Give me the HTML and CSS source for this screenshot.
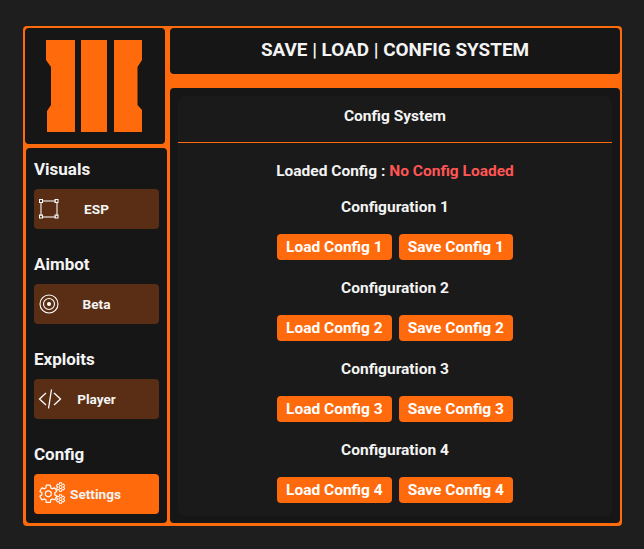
FILE: index.html
```html
<!DOCTYPE html>
<html lang="en">
<head>
    <meta charset="UTF-8">
    <meta name="viewport" content="width=device-width, initial-scale=1.0">
    <title>Config System</title>
    <link rel="stylesheet" href="styles.css">
</head>
<body>
    <svg class="defs" width="0" height="0">
        <defs>
            <path id="gear" d="M19.43 12.98c.04-.32.07-.64.07-.98 0-.34-.03-.66-.07-.98l2.11-1.65c.19-.15.24-.42.12-.64l-2-3.46c-.12-.22-.39-.3-.61-.22l-2.49 1c-.52-.4-1.08-.73-1.69-.98l-.38-2.65C14.46 2.18 14.25 2 14 2h-4c-.25 0-.46.18-.49.42l-.38 2.65c-.61.25-1.17.59-1.69.98l-2.49-1c-.23-.09-.49 0-.61.22l-2 3.46c-.13.22-.07.49.12.64l2.11 1.65c-.04.32-.07.65-.07.98 0 .33.03.66.07.98l-2.11 1.65c-.19.15-.24.42-.12.64l2 3.46c.12.22.39.3.61.22l2.49-1c.52.4 1.08.73 1.69.98l.38 2.65c.03.24.24.42.49.42h4c.25 0 .46-.18.49-.42l.38-2.65c.61-.25 1.17-.59 1.69-.98l2.49 1c.23.09.49 0 .61-.22l2-3.46c.12-.22.07-.49-.12-.64l-2.11-1.65zM12 15.5a3.500 3.500 0 1 1 0-7 3.500 3.500 0 0 1 0 7z"/>
        </defs>
    </svg>

    <div class="frame">
        <div class="logo-panel">
            <svg class="logo" width="96" height="92" viewBox="0 0 96 92">
                <path d="M0 0H29V92H1V71L5 65V27L0 20Z"/>
                <path d="M35 0H61V92H35Z"/>
                <path d="M68 0H96V20L91.500 27V65L96 70V92H68Z"/>
            </svg>
        </div>

        <div class="title-panel">
            <h1>SAVE | LOAD | CONFIG SYSTEM</h1>
        </div>

        <nav class="nav-panel">
            <div class="nav-group">
                <h2>Visuals</h2>
                <a class="nav-item">
                    <svg class="nav-icon" width="22" height="22" viewBox="0 0 22 22" fill="none" stroke="#fff">
                        <path d="M4 3H18M4 19H18M3 4V18M19 4V18" stroke-opacity=".7" stroke-width="1.500"/>
                        <rect x="1.500" y="1.500" width="3" height="3"/>
                        <rect x="17" y="1.500" width="3" height="3"/>
                        <rect x="1.500" y="17" width="3" height="3"/>
                        <rect x="17" y="17" width="3" height="3"/>
                    </svg>
                    <span>ESP</span>
                </a>
            </div>
            <div class="nav-group">
                <h2>Aimbot</h2>
                <a class="nav-item">
                    <svg class="nav-icon" width="22" height="22" viewBox="0 0 22 22" fill="none" stroke="#fff" stroke-width="1.100">
                        <circle cx="11" cy="11" r="9"/>
                        <circle cx="11" cy="11" r="5.500"/>
                        <circle cx="11" cy="11" r="2" fill="#fff" stroke="none"/>
                    </svg>
                    <span>Beta</span>
                </a>
            </div>
            <div class="nav-group">
                <h2>Exploits</h2>
                <a class="nav-item">
                    <svg class="nav-icon" width="24" height="22" viewBox="0 0 24 22" fill="none" stroke="#fff" stroke-width="1.300">
                        <path d="M8 5L1.500 11L8 17M16 5L22.500 11L16 17M13.500 1.500L10.500 20.500"/>
                    </svg>
                    <span>Player</span>
                </a>
            </div>
            <div class="nav-group">
                <h2>Config</h2>
                <a class="nav-item active">
                    <svg class="nav-icon" width="28" height="24" viewBox="0 0 28 24" fill="none" stroke="#fff">
                        <use href="#gear" stroke-width="1.400" transform="translate(0 1.500) scale(0.860)"/>
                        <use href="#gear" stroke-width="2.400" transform="translate(17.500 0) scale(0.420)"/>
                        <use href="#gear" stroke-width="2.400" transform="translate(17.500 12) scale(0.420)"/>
                    </svg>
                    <span>Settings</span>
                </a>
            </div>
        </nav>

        <main class="main-panel">
            <div class="config-box">
                <h3 class="config-title">Config System</h3>
                <hr class="divider">
                <p class="loaded">Loaded Config : <span class="loaded-state">No Config Loaded</span></p>

                <section class="slot">
                    <h4>Configuration 1</h4>
                    <div class="slot-buttons">
                        <button class="button">Load Config 1</button>
                        <button class="button">Save Config 1</button>
                    </div>
                </section>
                <section class="slot">
                    <h4>Configuration 2</h4>
                    <div class="slot-buttons">
                        <button class="button">Load Config 2</button>
                        <button class="button">Save Config 2</button>
                    </div>
                </section>
                <section class="slot">
                    <h4>Configuration 3</h4>
                    <div class="slot-buttons">
                        <button class="button">Load Config 3</button>
                        <button class="button">Save Config 3</button>
                    </div>
                </section>
                <section class="slot">
                    <h4>Configuration 4</h4>
                    <div class="slot-buttons">
                        <button class="button">Load Config 4</button>
                        <button class="button">Save Config 4</button>
                    </div>
                </section>
            </div>
        </main>
    </div>
</body>
</html>
```

FILE: styles.css
```css
* {
    box-sizing: border-box;
}
body {
    margin: 0;
    padding: 26px 22px 23px 23px;
    background-color: #1e1e1e;
    font-family: Roboto, "Liberation Sans", sans-serif;
    color: #f4f4f4;
}
.defs {
    position: absolute;
}
.frame {
    display: grid;
    grid-template-columns: 145px 450px;
    grid-template-rows: 116px 375px;
    row-gap: 4px;
    width: 599px;
    height: 500px;
    padding: 2px 2px 3px 2px;
    background-color: #ff6a0d;
    border-radius: 4px;
}
.logo-panel, .title-panel, .nav-panel, .main-panel {
    background-color: #161616;
    border-radius: 4px;
}
.logo-panel {
    width: 140px;
    padding: 12px 0 0 21px;
}
.logo {
    display: block;
    fill: #ff6a0d;
}
.title-panel {
    grid-row: 1;
    grid-column: 2;
    align-self: start;
    display: flex;
    align-items: center;
    justify-content: center;
    height: 46px;
    padding-bottom: 3px;
}
h1 {
    margin: 0;
    font-size: 18.9px;
    font-weight: 700;
}
.main-panel {
    grid-row: 1 / 3;
    grid-column: 2;
    margin-top: 60px;
    padding: 8px;
}
.nav-panel {
    grid-row: 2;
    grid-column: 1;
    width: 141px;
    margin-left: 1px;
    padding: 12px 8px 0 8px;
}
.nav-group {
    height: 95px;
}
.nav-group h2 {
    margin: 0 0 10px 0;
    font-size: 17px;
    line-height: 19px;
    font-weight: 700;
}
.nav-item {
    display: grid;
    grid-template-columns: 1fr auto 1fr;
    align-items: center;
    width: 125px;
    height: 40px;
    padding-left: 4px;
    padding-right: 4px;
    background-color: #5a2e15;
    border-radius: 4px;
    font-size: 13.6px;
    font-weight: 700;
}
.nav-item.active {
    padding-right: 6px;
    background-color: #ff6a0d;
}
.nav-icon {
    display: block;
}
.config-box {
    height: 420px;
    background-color: #1a1a1a;
    border-radius: 8px;
    text-align: center;
    font-size: 15.5px;
    font-weight: 700;
}
.config-title {
    margin: 0;
    padding-top: 11px;
    font-size: 15.5px;
    line-height: 18px;
    font-weight: 700;
}
.divider {
    height: 1px;
    margin: 17px 0 0 0;
    border: none;
    background-color: #ff6a0d;
}
.loaded {
    margin: 19px 0 0 0;
    line-height: 18px;
}
.loaded-state {
    color: #ff5555;
}
.slot {
    padding-top: 18px;
    height: 81px;
}
.slot h4 {
    margin: 0 0 18px 0;
    font-size: 15.5px;
    line-height: 18px;
    font-weight: 700;
}
.slot-buttons {
    display: flex;
    justify-content: center;
    gap: 7px;
}
.button {
    height: 26px;
    padding: 0 9px;
    background-color: #ff6a0d;
    color: #fff;
    border: none;
    border-radius: 4px;
    font-family: inherit;
    font-size: 15.5px;
    font-weight: 700;
}
```
